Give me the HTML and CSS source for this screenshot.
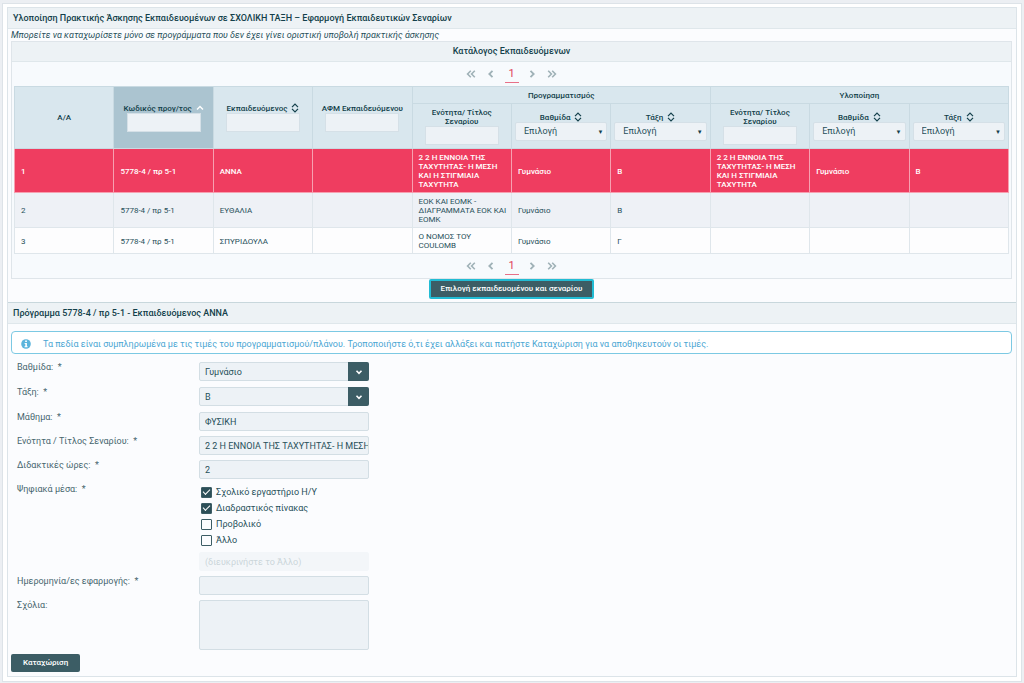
FILE: index.html
```html
<!DOCTYPE html>
<html lang="el">
<head>
<meta charset="utf-8">
<title>Υλοποίηση Πρακτικής Άσκησης</title>
<link rel="stylesheet" href="styles.css">
</head>
<body>
<svg class="sprite" aria-hidden="true">
  <symbol id="sort" viewBox="0 0 8 10"><path d="M1 4.200 4 1.200 7 4.200M1 5.800 4 8.800 7 5.800" fill="none" stroke="currentColor" stroke-width="1.2"/></symbol>
  <symbol id="up" viewBox="0 0 8 10"><path d="M1 6.500 4 3.500 7 6.500" fill="none" stroke="currentColor" stroke-width="1.4"/></symbol>
  <symbol id="prev" viewBox="0 0 10 10"><path d="M6.500 1.800 3.300 5l3.200 3.200" fill="none" stroke="currentColor" stroke-width="1.8"/></symbol>
  <symbol id="next" viewBox="0 0 10 10"><path d="M3.500 1.800 6.700 5 3.500 8.200" fill="none" stroke="currentColor" stroke-width="1.8"/></symbol>
  <symbol id="first" viewBox="0 0 10 10"><path d="M4.800 1.800 1.600 5l3.200 3.200M8.800 1.800 5.600 5l3.200 3.200" fill="none" stroke="currentColor" stroke-width="1.6"/></symbol>
  <symbol id="last" viewBox="0 0 10 10"><path d="M1.200 1.800 4.400 5 1.200 8.200M5.200 1.800 8.400 5 5.200 8.200" fill="none" stroke="currentColor" stroke-width="1.6"/></symbol>
  <symbol id="chevron" viewBox="0 0 8 8"><path d="M1.500 2.800 4 5.300 6.500 2.800" fill="none" stroke="currentColor" stroke-width="1.6"/></symbol>
</svg>
<main class="frame">
  <section class="panel">
    <h1 class="panel-title">Υλοποίηση Πρακτικής Άσκησης Εκπαιδευομένων σε ΣΧΟΛΙΚΗ ΤΑΞΗ – Εφαρμογή Εκπαιδευτικών Σεναρίων</h1>
    <div class="catalog-area">
      <p class="note">Μπορείτε να καταχωρίσετε μόνο σε προγράμματα που δεν έχει γίνει οριστική υποβολή πρακτικής άσκησης</p>
      <div class="catalog">
        <h2 class="catalog-title">Κατάλογος Εκπαιδευόμενων</h2>
        <nav class="pager" aria-label="Σελίδες">
          <button type="button" aria-label="Πρώτη"><svg><use href="#first"/></svg></button>
          <button type="button" aria-label="Προηγούμενη"><svg><use href="#prev"/></svg></button>
          <button type="button" class="current">1</button>
          <button type="button" aria-label="Επόμενη"><svg><use href="#next"/></svg></button>
          <button type="button" aria-label="Τελευταία"><svg><use href="#last"/></svg></button>
        </nav>
        <table class="grid">
          <thead>
            <tr class="groups">
              <th rowspan="2">Α/Α</th>
              <th rowspan="2" class="sorted"><label for="f1">Κωδικός προγ/τος <svg class="sort"><use href="#up"/></svg></label><input id="f1" type="text"></th>
              <th rowspan="2"><label for="f2">Εκπαιδευόμενος <svg class="sort"><use href="#sort"/></svg></label><input id="f2" type="text"></th>
              <th rowspan="2"><label for="f3">ΑΦΜ Εκπαιδευόμενου</label><input id="f3" type="text"></th>
              <th colspan="3">Προγραμματισμός</th>
              <th colspan="3">Υλοποίηση</th>
            </tr>
            <tr class="filters">
              <th><label for="f4">Ενότητα/ Τίτλος Σεναρίου</label><input id="f4" type="text"></th>
              <th><label for="f5">Βαθμίδα <svg class="sort"><use href="#sort"/></svg></label><div class="pick"><select id="f5"><option>Επιλογή</option></select></div></th>
              <th><label for="f6">Τάξη <svg class="sort"><use href="#sort"/></svg></label><div class="pick"><select id="f6"><option>Επιλογή</option></select></div></th>
              <th><label for="f7">Ενότητα/ Τίτλος Σεναρίου</label><input id="f7" type="text"></th>
              <th><label for="f8">Βαθμίδα <svg class="sort"><use href="#sort"/></svg></label><div class="pick"><select id="f8"><option>Επιλογή</option></select></div></th>
              <th><label for="f9">Τάξη <svg class="sort"><use href="#sort"/></svg></label><div class="pick"><select id="f9"><option>Επιλογή</option></select></div></th>
            </tr>
          </thead>
          <tbody>
            <tr class="selected"><td>1</td><td>5778-4 / πρ 5-1</td><td>ΑΝΝΑ</td><td></td><td>2 2 Η ΕΝΝΟΙΑ ΤΗΣ ΤΑΧΥΤΗΤΑΣ- Η ΜΕΣΗ ΚΑΙ Η ΣΤΙΓΜΙΑΙΑ ΤΑΧΥΤΗΤΑ</td><td>Γυμνάσιο</td><td>Β</td><td>2 2 Η ΕΝΝΟΙΑ ΤΗΣ ΤΑΧΥΤΗΤΑΣ- Η ΜΕΣΗ ΚΑΙ Η ΣΤΙΓΜΙΑΙΑ ΤΑΧΥΤΗΤΑ</td><td>Γυμνάσιο</td><td>Β</td></tr>
            <tr class="even"><td>2</td><td>5778-4 / πρ 5-1</td><td>ΕΥΘΑΛΙΑ</td><td></td><td>ΕΟΚ ΚΑΙ ΕΟΜΚ - ΔΙΑΓΡΑΜΜΑΤΑ ΕΟΚ ΚΑΙ ΕΟΜΚ</td><td>Γυμνάσιο</td><td>Β</td><td></td><td></td><td></td></tr>
            <tr><td>3</td><td>5778-4 / πρ 5-1</td><td>ΣΠΥΡΙΔΟΥΛΑ</td><td></td><td>Ο ΝΟΜΟΣ ΤΟΥ COULOMB</td><td>Γυμνάσιο</td><td>Γ</td><td></td><td></td><td></td></tr>
          </tbody>
        </table>
        <nav class="pager" aria-label="Σελίδες κάτω">
          <button type="button" aria-label="Πρώτη"><svg><use href="#first"/></svg></button>
          <button type="button" aria-label="Προηγούμενη"><svg><use href="#prev"/></svg></button>
          <button type="button" class="current">1</button>
          <button type="button" aria-label="Επόμενη"><svg><use href="#next"/></svg></button>
          <button type="button" aria-label="Τελευταία"><svg><use href="#last"/></svg></button>
        </nav>
      </div>
      <div class="choose"><button type="button" class="btn focused">Επιλογή εκπαιδευομένου και σεναρίου</button></div>
    </div>
    <h2 class="panel-title second">Πρόγραμμα 5778-4 / πρ 5-1 - Εκπαιδευόμενος ΑΝΝΑ</h2>
    <form class="details">
      <div class="message">
        <svg viewBox="0 0 10 10"><circle cx="5" cy="5" r="4.800" fill="#5ab4dc"/><path d="M4.200 1.600h1.700v1.500H4.200zM3.600 4h2.300v3.300h.7v1H3.500v-1h.8V5h-.7z" fill="#fff"/></svg>
        <span>Τα πεδία είναι συμπληρωμένα με τις τιμές του προγραμματισμού/πλάνου. Τροποποιήστε ό,τι έχει αλλάξει και πατήστε Καταχώριση για να αποθηκευτούν οι τιμές.</span>
      </div>
      <div class="fields">
        <label for="level">Βαθμίδα: &nbsp;*</label>
        <div class="drop"><select id="level"><option>Γυμνάσιο</option></select><span><svg><use href="#chevron"/></svg></span></div>
        <label for="grade">Τάξη: &nbsp;*</label>
        <div class="drop"><select id="grade"><option>Β</option></select><span><svg><use href="#chevron"/></svg></span></div>
        <label for="course">Μάθημα: &nbsp;*</label>
        <input id="course" type="text" value="ΦΥΣΙΚΗ">
        <label for="unit">Ενότητα / Τίτλος Σεναρίου: &nbsp;*</label>
        <input id="unit" type="text" value="2 2 Η ΕΝΝΟΙΑ ΤΗΣ ΤΑΧΥΤΗΤΑΣ- Η ΜΕΣΗ ΚΑΙ Η ΣΤΙΓΜΙΑΙΑ ΤΑΧΥΤΗΤΑ">
        <label for="hours">Διδακτικές ώρες: &nbsp;*</label>
        <input id="hours" type="text" value="2">
        <span class="legend" id="media">Ψηφιακά μέσα: &nbsp;*</span>
        <div class="checks" role="group" aria-labelledby="media">
          <label><input type="checkbox" checked>Σχολικό εργαστήριο Η/Υ</label>
          <label><input type="checkbox" checked>Διαδραστικός πίνακας</label>
          <label><input type="checkbox">Προβολικό</label>
          <label><input type="checkbox">Άλλο</label>
          <input type="text" class="other" aria-label="Άλλο" placeholder="(διευκρινήστε το Άλλο)" disabled>
        </div>
        <label for="dates">Ημερομηνία/ες εφαρμογής: &nbsp;*</label>
        <input id="dates" type="text">
        <label for="notes">Σχόλια:</label>
        <textarea id="notes"></textarea>
      </div>
      <button type="button" class="btn">Καταχώριση</button>
    </form>
  </section>
</main>
</body>
</html>
```
FILE: styles.css
```css
* { box-sizing: border-box; }
body {
  margin: 0;
  padding: 3px 2px 1px;
  background: #eceff3;
  color: #27505a;
  font: 9px/12px Roboto, "Liberation Sans", sans-serif;
}
button, input, select, textarea { font: inherit; color: inherit; margin: 0; }
.sprite { position: absolute; width: 0; height: 0; }
.frame { border: 1px solid #dde3e8; background: #fff; padding: 3px 4px 4px; }
.panel { border: 1px solid #dce4e9; background: #fbfcfe; }
.panel-title {
  margin: 0;
  padding: 4px 5px;
  background: #edf2f5;
  border-bottom: 1px solid #dfe7eb;
  color: #123f4a;
  font-size: 9px;
  font-weight: 500;
}
.panel-title.second { border-top: 1px solid #c8d7dc; }
.catalog-area { padding: 0 4px 3px 3px; }
.note { margin: 0; font-style: italic; line-height: 12px; }
.catalog { border: 1px solid #dfe5ea; background: #f7fafd; }
.catalog-title {
  margin: 0;
  padding: 3px 4px 4px;
  background: #edf2f5;
  border-bottom: 1px solid #dfe7eb;
  color: #123f4a;
  font-size: 9px;
  font-weight: 500;
  text-align: center;
}
.pager { display: flex; justify-content: center; align-items: center; gap: 7px; height: 24px; }
.pager button {
  display: flex;
  justify-content: center;
  align-items: center;
  width: 13px;
  height: 17px;
  padding: 0;
  border: 0;
  background: none;
  color: #9fb1b7;
}
.pager svg { width: 10px; height: 10px; }
.pager .current { width: 14px; border-bottom: 1px solid #e87088; color: #e03a5a; font-size: 11px; }
.grid { width: calc(100% - 4px); margin: 0 2px; border-collapse: collapse; table-layout: fixed; font-size: 8px; line-height: 9px; }
.grid th { padding: 0 6px; border: 1px solid #c9dae2; background: #d9e7ee; font-weight: 500; color: #123f4a; }
.grid .groups { height: 17px; }
.grid .filters { height: 45px; }
.grid .sorted { background: #abc4d0; }
.grid .sorted .sort { color: #fff; }
.grid th label { display: block; margin: 0 -4px; }
.grid .filters label { margin: 0; }
.sort { width: 8px; height: 10px; margin: 0 0 0 2px; vertical-align: -2px; }
.grid input { display: block; width: 74px; height: 19px; margin: 0 auto; padding: 0 6px; border: 1px solid #d5e0e7; background: #edf2f6; }
.pick { position: relative; margin: 0 -3px; }
.pick select {
  display: block;
  width: 100%;
  height: 19px;
  padding: 0 8px;
  appearance: none;
  border: 1px solid #d5e0e7;
  border-radius: 2px;
  background: #edf2f6;
  color: #27505a;
  font-size: 9px;
  font-weight: 400;
}
.pick::after { content: "▼"; position: absolute; right: 4px; top: 5px; font-size: 6px; pointer-events: none; }
.grid td { padding: 4px 2px 3px 6px; border: 1px solid #dfe6eb; background: #fdfdfe; }
.grid .even td { background: #eef1f6; }
.grid .selected td { background: #ef3d60; border-color: #f7a0b0; color: #fff; font-weight: 500; }
.choose { display: flex; justify-content: center; }
.btn { height: 18px; padding: 0 12px; border: 0; border-radius: 2px; background: #3c5d65; color: #fff; font-size: 8px; font-weight: 500; }
.btn.focused { height: 20px; padding: 0 10px; border: 2px solid #22bcd4; }
.details { padding: 7px 4px 4px 3px; }
.message {
  display: flex;
  align-items: center;
  gap: 12px;
  height: 23px;
  padding: 2px 9px 0;
  border: 1px solid #7cc9e3;
  border-radius: 4px;
  background: #fff;
  color: #4ba6d3;
}
.message svg { width: 10px; height: 10px; }
.fields { display: grid; grid-template-columns: 182px 170px; row-gap: 5px; padding: 8px 6px 4px; align-items: start; }
.fields > label, .legend { line-height: 10px; color: #47666e; }
.fields > input, .drop select, .other, textarea {
  display: block;
  width: 100%;
  height: 19px;
  padding: 0 0 0 5px;
  border: 1px solid #d3dee4;
  border-radius: 2px;
  background: #edf2f6;
}
.drop { position: relative; margin-bottom: 1px; }
.drop select { appearance: none; }
.drop span {
  position: absolute;
  right: 0;
  top: 0;
  display: flex;
  align-items: center;
  justify-content: center;
  width: 21px;
  height: 19px;
  border-radius: 0 2px 2px 0;
  background: #3c5d65;
  color: #fff;
  pointer-events: none;
}
.drop svg { width: 8px; height: 8px; }
.checks label { display: flex; align-items: center; gap: 4px; height: 16px; padding-left: 2px; }
.checks input[type="checkbox"] {
  width: 11px;
  height: 11px;
  appearance: none;
  border: 1px solid #3c5d65;
  border-radius: 1px;
}
.checks input:checked { background: #2c4f58; display: grid; place-content: center; }
.checks input:checked::after { content: ""; width: 6px; height: 3px; border: solid #fff; border-width: 0 0 1px 1px; rotate: -45deg; margin-bottom: 2px; }
.checks .other { margin-top: 4px; opacity: 0.5; border-color: #edf2f6; }
.other::placeholder { color: #9aafb5; }
.fields textarea { height: 50px; resize: none; }
```
